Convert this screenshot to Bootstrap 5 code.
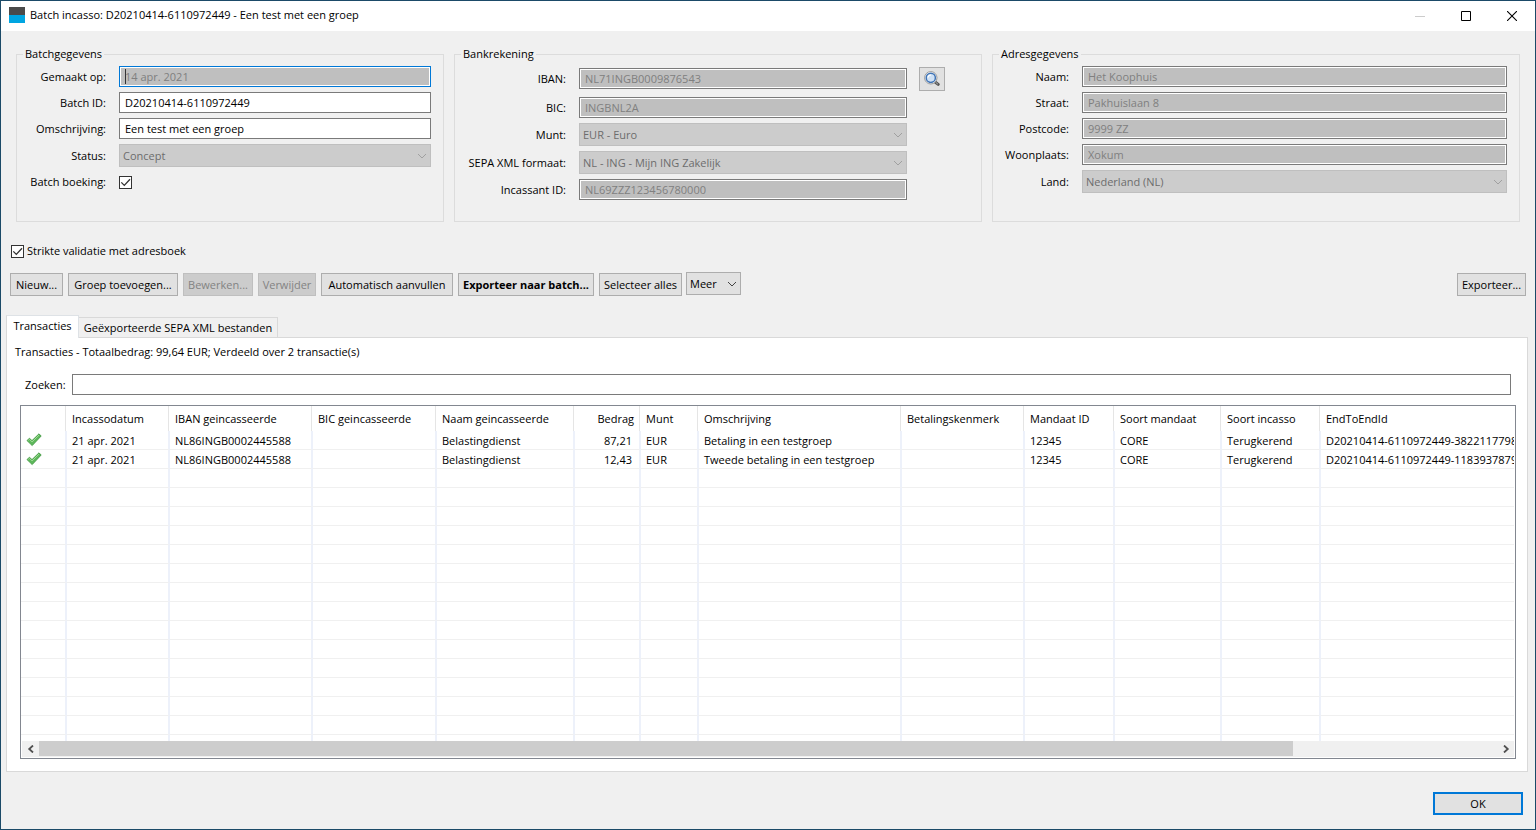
<!DOCTYPE html>
<html lang="nl">
<head>
<meta charset="utf-8">
<meta name="viewport" content="width=device-width, initial-scale=1">
<title>Batch incasso</title>
<link href="https://cdn.jsdelivr.net/npm/bootstrap@5.3.0/dist/css/bootstrap.min.css" rel="stylesheet">
<style>
  body, .btn, .form-control, .form-select, .grid-table, legend, .nav-tabs .nav-link {
    font-family: "Open Sans", "Noto Sans", sans-serif; font-size: 11px; line-height: 16px; color: #000;
  }
  .app-window { min-height: 100vh; background: #f0f0f0; border: 1px solid #1b4a68; }
  .title-bar { height: 30px; background: #fff; padding: 0 0 2px 8px; }
  .title-text { padding-left: 5px; }
  .caption-btn { width: 46px; height: 28px; border: 0; background: none; padding: 0; }

  /* Group boxes */
  .groups { display: grid; grid-template-columns: 428fr 528fr 528fr; gap: 10px; padding: 15px 15px 0; }
  .group-box { border: 1px solid #dcdcdc; height: 176px; padding: 4px 12px 0 0; min-width: 0; }
  .group-box legend { float: none; width: auto; margin: 0 0 0 6px; padding: 0 2px; }
  .group-box.bank { padding-right: 74px; }
  .form-line { display: flex; align-items: center; gap: 13px; margin-bottom: 5px; }
  .form-line > label { flex: none; width: 89px; text-align: right; white-space: nowrap; }
  .bank .form-line > label { width: 111px; }
  .address .form-line > label { width: 76px; }
  .bank .with-button { height: 25px; margin-right: -38px; margin-bottom: 6px; gap: 12px; }
  .bank .with-button > label { margin-right: 1px; }
  .check-line { padding-top: 2px; }

  .form-control { height: 21px; min-height: 0; padding: 0 5px; border: 1px solid #7a7a7a; border-radius: 0; background: #fff; }
  .form-control:disabled, .form-control[readonly] { background-color: #bfbfbf; box-shadow: inset 0 0 0 1px #fff; color: #808080; opacity: 1; }
  .form-control.has-caret { border-color: #0078d7; background: #bfbfbf linear-gradient(#333, #333) 5px center / 1px 15px no-repeat; }
  .form-select { height: 23px; padding: 0 24px 0 3px; border: 1px solid #bfbfbf; border-radius: 0; background-color: #ccc;
    background-image: url("data:image/svg+xml,%3Csvg xmlns='http://www.w3.org/2000/svg' viewBox='0 0 10 6'%3E%3Cpath d='M1 1l4 4 4-4' fill='none' stroke='%23a0a0a0'/%3E%3C/svg%3E");
    background-size: 10px 6px; background-position: right 3px center; }
  .form-select:disabled { background-color: #ccc; color: #6d6d6d; opacity: 1; }
  .form-select.more { width: 55px; border-color: #adadad; background-color: #e1e1e1; background-position: right 3px center; padding-right: 14px; margin: -1px 0 0 -1px;
    background-image: url("data:image/svg+xml,%3Csvg xmlns='http://www.w3.org/2000/svg' viewBox='0 0 10 6'%3E%3Cpath d='M1 1l4 4 4-4' fill='none' stroke='%23444'/%3E%3C/svg%3E"); }
  .form-check-input { width: 13px; height: 13px; margin: 0; border: 1px solid #333; border-radius: 0 !important; background-color: #fff; }
  .form-check-input:checked { background-color: #fff; border-color: #333; background-size: 11px 11px;
    background-image: url("data:image/svg+xml,%3Csvg xmlns='http://www.w3.org/2000/svg' viewBox='0 0 11 11'%3E%3Cpath d='M1.3 5.4l3 3L10 2.2' fill='none' stroke='%23333' stroke-width='1.3'/%3E%3C/svg%3E"); }

  .btn { height: 23px; padding: 0; border: 1px solid #adadad; border-radius: 0; background: #e1e1e1; white-space: nowrap; }
  .btn:disabled { background: #ccc; border-color: #bfbfbf; color: #838383; opacity: 1; }
  .btn-look { flex: none; width: 26px; height: 24px; }
  .btn-ok { width: 90px; border: 2px solid #0078d7; }
  .strict-line { padding: 21px 10px 0; gap: 3px; }
  .toolbar { display: flex; gap: 5px; padding: 14px 9px 0; }
  .w-nieuw { width: 53px; } .w-groep { width: 110px; } .w-bewerk { width: 70px; } .w-verwijder { width: 58px; }
  .w-auto-fill { width: 132px; } .w-batch { width: 136px; } .w-select { width: 83px; } .w-export { width: 69px; }

  /* Tabs */
  .nav-tabs { border: 0; padding: 19px 5px 0; align-items: flex-end; }
  .nav-tabs .nav-link { border: 1px solid #d9d9d9; border-radius: 0; margin: 0; padding: 0; height: 20px; width: 199px; border-left: 0; border-bottom: 0; text-align: center; line-height: 20px; background: #f0f0f0; }
  .nav-tabs .nav-link.active { width: 73px; height: 23px; border-left: 1px solid #d9d9d9; background: #fff; color: #000; margin-bottom: -1px; position: relative; }
  .tab-panel { margin: 0 7px 0 5px; border: 1px solid #d9d9d9; background: #fff; flex: 1 1 0; padding: 6px 11px 12px 13px; }
  .summary { margin-left: -5px; }
  .search-line { padding: 14px 5px 10px; gap: 5px; }
  .search-line label { flex: none; width: 42px; }

  /* Transaction list */
  .list-frame { border: 1px solid #828790; flex: 1 1 0; padding: 0 1px 1px 0; min-height: 200px; }
  .list-view { flex: 1 1 0; overflow: hidden; }
  .grid-table { table-layout: fixed; width: 100%; border-collapse: separate; border-spacing: 0; }
  .grid-table th, .grid-table td { height: 19px; padding: 2px 0 0 5px; overflow: hidden; white-space: nowrap; line-height: 16px; vertical-align: top; }
  .grid-table th { height: 25px; padding-top: 5px; font-weight: 400; background: linear-gradient(#e5e5e5, #e5e5e5) right 1px top / 1px 100% no-repeat; }
  .grid-table td { border-right: 2px solid #edf1fa; border-bottom: 1px solid #f0f0f0; }
  .grid-table th:last-child { background: none; }
  .grid-table td:last-child { border-right: 0; }
  .grid-table .amount { text-align: right; padding-right: 7px; }
  .grid-table svg { display: block; }
  .scroll-bar { height: 16px; background: #f0f0f0; margin-left: 1px; }
  .scroll-bar button { width: 17px; height: 15px; border: 0; padding: 0; background: none; line-height: 0; }
  .scroll-thumb { width: 86%; height: 15px; background: #cdcdcd; }
  .footer-bar { padding: 20px 12px 14px; }
</style>
</head>
<body>
<div class="app-window d-flex flex-column">
  <header class="title-bar d-flex align-items-center">
    <svg width="16" height="16" viewBox="0 0 16 16" aria-hidden="true"><path fill="#4a4a4a" d="M0 0h16v8H0z"/><path fill="#00a5e1" d="M0 8h16v8H0z"/></svg>
    <span class="title-text flex-grow-1">Batch incasso: D20210414-6110972449 - Een test met een groep</span>
    <button class="caption-btn" type="button" aria-label="Minimaliseren" disabled><svg width="10" height="10" viewBox="0 0 10 10"><path d="M0 5.5h10" stroke="#ccc"/></svg></button>
    <button class="caption-btn" type="button" aria-label="Maximaliseren"><svg width="10" height="10" viewBox="0 0 10 10"><path d="M.5.5h9v9h-9z" fill="none" stroke="#000"/></svg></button>
    <button class="caption-btn" type="button" aria-label="Sluiten"><svg width="10" height="10" viewBox="0 0 10 10"><path d="M0 0l10 10M10 0L0 10" stroke="#000" stroke-width="1.1"/></svg></button>
  </header>

  <div class="groups">
    <fieldset class="group-box">
      <legend>Batchgegevens</legend>
      <div class="form-line"><label for="made">Gemaakt op:</label><input id="made" class="form-control has-caret" value="14 apr. 2021" readonly></div>
      <div class="form-line"><label for="batch">Batch ID:</label><input id="batch" class="form-control" value="D20210414-6110972449"></div>
      <div class="form-line"><label for="descr">Omschrijving:</label><input id="descr" class="form-control" value="Een test met een groep"></div>
      <div class="form-line"><label for="status">Status:</label><select id="status" class="form-select" disabled><option>Concept</option></select></div>
      <div class="form-line check-line"><label for="booking">Batch boeking:</label><input id="booking" class="form-check-input" type="checkbox" checked></div>
    </fieldset>
    <fieldset class="group-box bank">
      <legend>Bankrekening</legend>
      <div class="form-line with-button"><label for="iban">IBAN:</label><input id="iban" class="form-control" value="NL71INGB0009876543" disabled>
        <button class="btn btn-look" type="button" aria-label="Zoek rekening">
          <svg class="d-block mx-auto" width="16" height="16" viewBox="0 0 16 16"><path d="M11.4 11.2l2.8 2.2" stroke="#555" stroke-width="3" stroke-linecap="round"/><path d="M12 11.6l1.6 1.3" stroke="#aaa" stroke-linecap="round"/><circle cx="6.8" cy="6.8" r="6.2" fill="#fff" stroke="#999"/><circle cx="6.8" cy="6.8" r="4.6" fill="#cfe1f5" stroke="#3f73b5" stroke-width="1.5"/><path d="M4 6.5A3 3 0 0 1 7 4" fill="none" stroke="#fff" stroke-width="1.2"/></svg>
        </button></div>
      <div class="form-line"><label for="bic">BIC:</label><input id="bic" class="form-control" value="INGBNL2A" disabled></div>
      <div class="form-line"><label for="cur">Munt:</label><select id="cur" class="form-select" disabled><option>EUR - Euro</option></select></div>
      <div class="form-line"><label for="xml">SEPA XML formaat:</label><select id="xml" class="form-select" disabled><option>NL - ING - Mijn ING Zakelijk</option></select></div>
      <div class="form-line"><label for="cid">Incassant ID:</label><input id="cid" class="form-control" value="NL69ZZZ123456780000" disabled></div>
    </fieldset>
    <fieldset class="group-box address">
      <legend>Adresgegevens</legend>
      <div class="form-line"><label for="name">Naam:</label><input id="name" class="form-control" value="Het Koophuis" disabled></div>
      <div class="form-line"><label for="street">Straat:</label><input id="street" class="form-control" value="Pakhuislaan 8" disabled></div>
      <div class="form-line"><label for="zip">Postcode:</label><input id="zip" class="form-control" value="9999 ZZ" disabled></div>
      <div class="form-line"><label for="city">Woonplaats:</label><input id="city" class="form-control" value="Xokum" disabled></div>
      <div class="form-line"><label for="land">Land:</label><select id="land" class="form-select" disabled><option>Nederland (NL)</option></select></div>
    </fieldset>
  </div>

  <div class="strict-line d-flex align-items-center">
    <input id="strict" class="form-check-input" type="checkbox" checked><label for="strict">Strikte validatie met adresboek</label>
  </div>

  <div class="toolbar">
    <button type="button" class="btn w-nieuw">Nieuw...</button>
    <button type="button" class="btn w-groep">Groep toevoegen...</button>
    <button type="button" class="btn w-bewerk" disabled>Bewerken...</button>
    <button type="button" class="btn w-verwijder" disabled>Verwijder</button>
    <button type="button" class="btn w-auto-fill">Automatisch aanvullen</button>
    <button type="button" class="btn w-batch fw-bold">Exporteer naar batch...</button>
    <button type="button" class="btn w-select">Selecteer alles</button>
    <select class="form-select more" aria-label="Meer acties"><option>Meer</option></select>
    <button type="button" class="btn w-export ms-auto">Exporteer...</button>
  </div>

  <nav class="nav nav-tabs">
    <a class="nav-link active" href="#transacties">Transacties</a>
    <a class="nav-link" href="#bestanden">Geëxporteerde SEPA XML bestanden</a>
  </nav>
  <main id="transacties" class="tab-panel d-flex flex-column">
    <div class="summary">Transacties - Totaalbedrag: 99,64 EUR; Verdeeld over 2 transactie(s)</div>
    <div class="search-line d-flex align-items-center"><label for="search">Zoeken:</label><input id="search" class="form-control"></div>
    <div class="list-frame d-flex flex-column">
      <div class="list-view">
        <table class="grid-table">
          <colgroup>
            <col width="46"><col width="103"><col width="143"><col width="124"><col width="138"><col width="66"><col width="58"><col width="203"><col width="123"><col width="90"><col width="107"><col width="99"><col>
          </colgroup>
          <thead><tr><th></th><th>Incassodatum</th><th>IBAN geincasseerde</th><th>BIC geincasseerde</th><th>Naam geincasseerde</th><th class="amount">Bedrag</th><th>Munt</th><th>Omschrijving</th><th>Betalingskenmerk</th><th>Mandaat ID</th><th>Soort mandaat</th><th>Soort incasso</th><th>EndToEndId</th></tr></thead>
          <tbody id="rows">
            <tr><td><svg width="16" height="14" viewBox="0 0 16 14"><path d="M1 7.6L3.4 5.2 6 7.6 13 .8 15.2 3 6.2 12.6z" fill="#5db85b" stroke="#3c943c" stroke-width=".8"/><path d="M2.3 7.4l1.2-1L6 8.9l7-6.8" fill="none" stroke="#a3dc98"/></svg></td><td>21 apr. 2021</td><td>NL86INGB0002445588</td><td></td><td>Belastingdienst</td><td class="amount">87,21</td><td>EUR</td><td>Betaling in een testgroep</td><td></td><td>12345</td><td>CORE</td><td>Terugkerend</td><td>D20210414-6110972449-38221177988</td></tr>
            <tr><td><svg width="16" height="14" viewBox="0 0 16 14"><path d="M1 7.6L3.4 5.2 6 7.6 13 .8 15.2 3 6.2 12.6z" fill="#5db85b" stroke="#3c943c" stroke-width=".8"/><path d="M2.3 7.4l1.2-1L6 8.9l7-6.8" fill="none" stroke="#a3dc98"/></svg></td><td>21 apr. 2021</td><td>NL86INGB0002445588</td><td></td><td>Belastingdienst</td><td class="amount">12,43</td><td>EUR</td><td>Tweede betaling in een testgroep</td><td></td><td>12345</td><td>CORE</td><td>Terugkerend</td><td>D20210414-6110972449-11839378791</td></tr>
          </tbody>
        </table>
      </div>
      <div class="scroll-bar d-flex">
        <button type="button" aria-label="Naar links"><svg width="8" height="8" viewBox="0 0 8 8"><path d="M6 .5L2.2 4 6 7.5" fill="none" stroke="#505050" stroke-width="1.8"/></svg></button>
        <div class="flex-grow-1"><div class="scroll-thumb"></div></div>
        <button type="button" aria-label="Naar rechts"><svg width="8" height="8" viewBox="0 0 8 8"><path d="M2 .5L5.8 4 2 7.5" fill="none" stroke="#505050" stroke-width="1.8"/></svg></button>
      </div>
    </div>
  </main>
  <footer class="footer-bar d-flex justify-content-end"><button type="button" class="btn btn-ok">OK</button></footer>
</div>
<script>
  // Fill the visible part of the list with empty grid rows.
  const body = document.getElementById('rows');
  for (let r = 0; r < 15; r++) {
    const tr = body.insertRow();
    for (let c = 0; c < 13; c++) tr.insertCell();
  }
</script>
<script src="https://cdn.jsdelivr.net/npm/bootstrap@5.3.0/dist/js/bootstrap.bundle.min.js"></script>
</body>
</html>
